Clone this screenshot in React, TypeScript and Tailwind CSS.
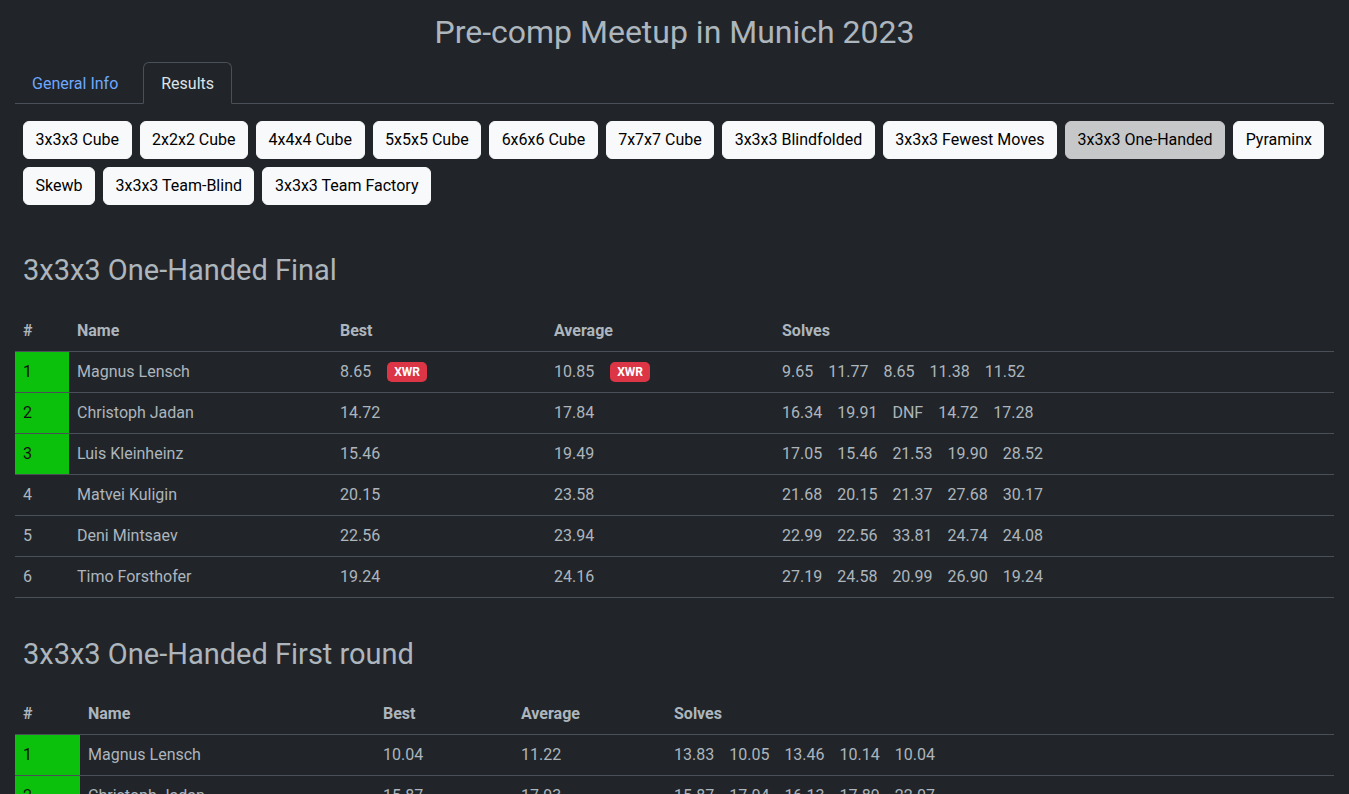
import React from "react"

const events = [
  "3x3x3 Cube",
  "2x2x2 Cube",
  "4x4x4 Cube",
  "5x5x5 Cube",
  "6x6x6 Cube",
  "7x7x7 Cube",
  "3x3x3 Blindfolded",
  "3x3x3 Fewest Moves",
  "3x3x3 One-Handed",
  "Pyraminx",
  "Skewb",
  "3x3x3 Team-Blind",
  "3x3x3 Team Factory",
]

interface Result {
  pos: number
  name: string
  best: string
  average: string
  bestRecord?: string
  averageRecord?: string
  solves: string[]
}

const finalResults: Result[] = [
  { pos: 1, name: "Magnus Lensch", best: "8.65", bestRecord: "XWR", average: "10.85", averageRecord: "XWR", solves: ["9.65", "11.77", "8.65", "11.38", "11.52"] },
  { pos: 2, name: "Christoph Jadan", best: "14.72", average: "17.84", solves: ["16.34", "19.91", "DNF", "14.72", "17.28"] },
  { pos: 3, name: "Luis Kleinheinz", best: "15.46", average: "19.49", solves: ["17.05", "15.46", "21.53", "19.90", "28.52"] },
  { pos: 4, name: "Matvei Kuligin", best: "20.15", average: "23.58", solves: ["21.68", "20.15", "21.37", "27.68", "30.17"] },
  { pos: 5, name: "Deni Mintsaev", best: "22.56", average: "23.94", solves: ["22.99", "22.56", "33.81", "24.74", "24.08"] },
  { pos: 6, name: "Timo Forsthofer", best: "19.24", average: "24.16", solves: ["27.19", "24.58", "20.99", "26.90", "19.24"] },
]

const firstRoundResults: Result[] = [
  { pos: 1, name: "Magnus Lensch", best: "10.04", average: "11.22", solves: ["13.83", "10.05", "13.46", "10.14", "10.04"] },
  { pos: 2, name: "Christoph Jadan", best: "15.87", average: "17.93", solves: ["15.87", "17.04", "16.13", "17.89", "22.07"] },
  { pos: 3, name: "Luis Kleinheinz", best: "16.02", average: "18.40", solves: ["18.11", "16.02", "19.66", "17.43", "20.12"] },
]

function Badge({ label }: { label: string }) {
  return (
    <span className="rounded-[5px] bg-[#dc3545] px-[7px] py-[3px] text-[12px] font-bold leading-[14px] text-white">
      {label}
    </span>
  )
}

function ResultsTable({ results, widths }: { results: Result[]; widths: string[] }) {
  return (
    <table className="w-full table-fixed border-collapse text-[16px] text-[#adb5bd]">
      <thead>
        <tr className="border-b border-[#495057]">
          <th className={`${widths[0]} h-[40px] px-2 text-left font-bold`}>#</th>
          <th className={`${widths[1]} px-2 text-left font-bold`}>Name</th>
          <th className={`${widths[2]} px-2 text-left font-bold`}>Best</th>
          <th className={`${widths[3]} px-2 text-left font-bold`}>Average</th>
          <th className="px-2 text-left font-bold">Solves</th>
        </tr>
      </thead>
      <tbody>
        {results.map((r) => (
          <tr key={r.pos} className="border-b border-[#495057]">
            <td className={`h-[41px] px-2 ${r.pos <= 3 ? "bg-[#0cc10c] text-[#101010]" : ""}`}>{r.pos}</td>
            <td className="px-2">{r.name}</td>
            <td className="px-2">
              <div className="flex items-center gap-4">
                <span>{r.best}</span>
                {r.bestRecord && <Badge label={r.bestRecord} />}
              </div>
            </td>
            <td className="px-2">
              <div className="flex items-center gap-4">
                <span>{r.average}</span>
                {r.averageRecord && <Badge label={r.averageRecord} />}
              </div>
            </td>
            <td className="px-2">
              <div className="flex gap-[15px]">
                {r.solves.map((s, i) => (
                  <span key={i}>{s}</span>
                ))}
              </div>
            </td>
          </tr>
        ))}
      </tbody>
    </table>
  )
}

export default function App() {
  return (
    <div className="min-h-screen bg-[#212529] px-[15px] font-['Roboto',sans-serif] leading-6 text-[#dee2e6]">
      <h2 className="pt-[12px] text-center text-[32px] leading-[40px] text-[#adb5bd]">Pre-comp Meetup in Munich 2023</h2>

      {/* tabs */}
      <div className="mt-[10px] flex border-b border-[#495057]">
        <div className="mr-2 mb-[-1px] border border-transparent px-4 pt-[9px] pb-[7px] text-[#6ea8fe]">General Info</div>
        <div className="mb-[-1px] rounded-t-[6px] border border-[#495057] border-b-[#212529] bg-[#212529] px-[17px] pt-[9px] pb-[7px] text-[#dee2e6]">
          Results
        </div>
      </div>

      <div className="mt-[9px] flex flex-wrap gap-2 p-2">
        {events.map((e) => (
          <button
            key={e}
            className={`rounded-[6px] border px-[11.5px] py-[6px] text-[16px] leading-6 text-black ${
              e === "3x3x3 One-Handed" ? "border-[#c6c7c8] bg-[#c6c7c8]" : "border-[#f8f9fa] bg-[#f8f9fa]"
            }`}
          >
            {e}
          </button>
        ))}
      </div>

      <h3 className="mt-[40px] mb-[23px] px-2 text-[29px] leading-[35px] text-[#adb5bd]">3x3x3 One-Handed Final</h3>
      <ResultsTable results={finalResults} widths={["w-[54px]", "w-[263px]", "w-[214px]", "w-[228px]"]} />

      <h3 className="mt-[39px] mb-[23px] px-2 text-[29px] leading-[35px] text-[#adb5bd]">3x3x3 One-Handed First round</h3>
      <ResultsTable results={firstRoundResults} widths={["w-[65px]", "w-[295px]", "w-[138px]", "w-[153px]"]} />
    </div>
  )
}
